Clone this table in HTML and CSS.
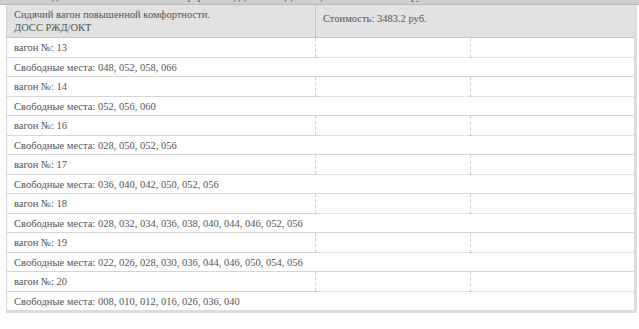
FILE: index.html
```html
<!DOCTYPE html>
<html lang="ru">
<head>
<meta charset="utf-8">
<title>Места в вагонах</title>
<link rel="stylesheet" href="styles.css">
</head>
<body>
<div class="prev-row"><span>Сидячий вагон повышенной комфортности, ДОСС РЖД / ОКТ, Стоимость: 3483.2 руб.</span></div>
<table class="seats">
  <colgroup>
    <col class="c1"><col class="c2"><col class="c3">
  </colgroup>
  <thead>
    <tr>
      <th class="h1">Сидячий вагон повышенной комфортности.<br>ДОСС РЖД/ОКТ</th>
      <th class="h2" colspan="2">Стоимость: 3483.2 руб.</th>
    </tr>
  </thead>
  <tbody>
    <tr class="car"><td>вагон №: 13</td><td class="blank"></td><td class="blank"></td></tr>
    <tr class="free"><td colspan="3">Свободные места: 048, 052, 058, 066</td></tr>
    <tr class="car"><td>вагон №: 14</td><td class="blank"></td><td class="blank"></td></tr>
    <tr class="free"><td colspan="3">Свободные места: 052, 056, 060</td></tr>
    <tr class="car"><td>вагон №: 16</td><td class="blank"></td><td class="blank"></td></tr>
    <tr class="free"><td colspan="3">Свободные места: 028, 050, 052, 056</td></tr>
    <tr class="car"><td>вагон №: 17</td><td class="blank"></td><td class="blank"></td></tr>
    <tr class="free"><td colspan="3">Свободные места: 036, 040, 042, 050, 052, 056</td></tr>
    <tr class="car"><td>вагон №: 18</td><td class="blank"></td><td class="blank"></td></tr>
    <tr class="free"><td colspan="3">Свободные места: 028, 032, 034, 036, 038, 040, 044, 046, 052, 056</td></tr>
    <tr class="car"><td>вагон №: 19</td><td class="blank"></td><td class="blank"></td></tr>
    <tr class="free"><td colspan="3">Свободные места: 022, 026, 028, 030, 036, 044, 046, 050, 054, 056</td></tr>
    <tr class="car"><td>вагон №: 20</td><td class="blank"></td><td class="blank"></td></tr>
    <tr class="free"><td colspan="3">Свободные места: 008, 010, 012, 016, 026, 036, 040</td></tr>
  </tbody>
</table>
</body>
</html>
```
FILE: styles.css
```css
html, body {
  margin: 0;
  padding: 0;
  background: #fff;
}

body {
  font-family: "Liberation Serif", "DejaVu Serif", serif;
  font-size: 10.5px;
  color: #555;
}

/* bottom edge of the previous block, scrolled mostly out of view */
.prev-row {
  height: 4px;
  overflow: hidden;
  background: #cfcfcf;
  border-bottom: 1px solid #b9b9b9;
  padding-left: 40px;
}

.prev-row span {
  display: block;
  margin-top: -9px;
  line-height: 12px;
  color: #444;
  white-space: nowrap;
}

.seats {
  margin-left: 6px;
  width: 631px;
  border-collapse: collapse;
  border-left: 1px solid #d4d4d4;
  border-right: 3px solid #dcdcdc;
  border-bottom: 3px solid #dcdcdc;
  table-layout: fixed;
}

.c1 { width: 309px; }
.c2 { width: 155px; }
.c3 { width: auto; }

thead th {
  background: #e2e2e2;
  font-weight: normal;
  text-align: left;
  vertical-align: top;
  padding: 3px 8px 3px 7px;
  line-height: 13px;
  border-bottom: 1px solid #c9c9c9;
}

thead .h1 {
  border-right: 1px solid #c4c4c4;
}

thead .h2 {
  padding-top: 7px;
}

tbody td {
  padding: 0 7px;
  line-height: 13px;
  white-space: nowrap;
}

.car td {
  height: 19px;
  border-bottom: 1px solid #d6d6d6;
}

.car td.blank {
  border-left: 1px dashed #cfcfcf;
  border-bottom: 1px dotted #c8c8c8;
}

.free td {
  height: 18px;
  border-bottom: 1px solid #d6d6d6;
}

.free:last-child td {
  border-bottom: none;
}
```
